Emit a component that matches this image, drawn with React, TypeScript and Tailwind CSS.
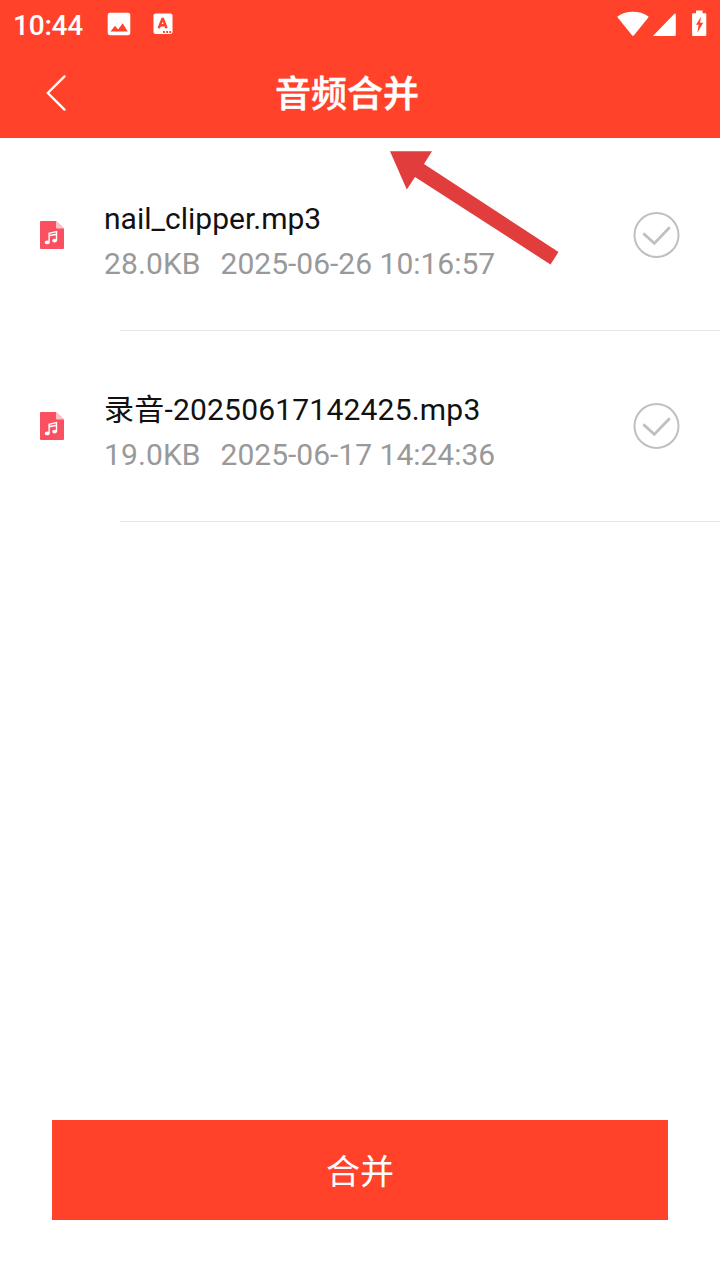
import { useState } from 'react';
import { clsx } from 'clsx';

interface AudioFile {
  id: number;
  name: string;
  size: string;
  createdAt: string;
}

const AUDIO_FILES: AudioFile[] = [
  {
    id: 1,
    name: 'nail_clipper.mp3',
    size: '28.0KB',
    createdAt: '2025-06-26 10:16:57',
  },
  {
    id: 2,
    name: '录音-20250617142425.mp3',
    size: '19.0KB',
    createdAt: '2025-06-17 14:24:36',
  },
];

// 含中文的文件名需要稍宽的字距
const hasChinese = (text: string) => /[\u4e00-\u9fff]/.test(text);

function StatusBar() {
  return (
    <div className="flex h-[50px] items-center justify-between pr-[13px] pl-[13px]">
      <div className="flex items-center">
        <span className="w-[94px] pt-0.5 text-[28px] leading-[48px] font-medium tracking-[-0.2px]">
          10:44
        </span>
        {/* 图片通知 */}
        <svg
          className="mb-0.5"
          width="24"
          height="24"
          viewBox="0 0 24 24"
          fill="none"
        >
          <rect x="0.7" y="0.7" width="22.6" height="22.6" rx="2.4" fill="#fff" />
          <path d="M3.5 19.5 8 13.7l3.1 3.8 4.6-6.2 5 8.2z" fill="#ff4229" />
        </svg>
        {/* 输入法通知 */}
        <svg
          className="mb-0.5 ml-[22px]"
          width="20"
          height="22"
          viewBox="0 0 20 22"
          fill="none"
        >
          <rect x="0.5" y="0.5" width="19" height="20.5" rx="2" fill="#fff" />
          <path
            d="M5.7 15.2 9.7 5.2l3.8 10M7.2 12.2h5"
            stroke="#ff4229"
            strokeWidth="2.5"
            strokeLinejoin="bevel"
          />
          <path d="M10 19h1.8M13.2 19H15M16.3 19h1.8" stroke="#ff4229" strokeWidth="1.8" />
        </svg>
      </div>

      <div className="flex items-center pb-[3px]">
        <svg width="32" height="26" viewBox="0 0 32 26" fill="#fff">
          <path d="M.9 5.2C9.2-.6 22.8-.6 31.1 5.2c.5.3.6.8.2 1.3L17 24.2c-.6.7-1.4.7-2 0L.7 6.5C.3 6 .4 5.5.9 5.2z" />
        </svg>
        <svg
          className="ml-[4px]"
          width="23"
          height="26"
          viewBox="0 0 23 26"
          fill="#fff"
        >
          <path d="M.6 24.2 21.2 3c.8-.8 1.6-.5 1.6.6v20.5c0 .5-.2.8-.8.8H1c-.7 0-.8-.3-.4-.7z" />
        </svg>
        <svg
          className="ml-[15px]"
          width="16"
          height="27"
          viewBox="0 0 16 27"
          fill="none"
        >
          <path
            d="M5 .6h6.6v2.6H14c.8 0 1.3.5 1.3 1.3v20.3c0 .8-.5 1.3-1.3 1.3H2.4c-.8 0-1.3-.5-1.3-1.3V4.5c0-.8.5-1.3 1.3-1.3H5z"
            fill="#fff"
          />
          <path d="M10 6.8 5 14.8h2.6L6.4 22.8l5.8-10H9z" fill="#ff4229" />
        </svg>
      </div>
    </div>
  );
}

function MusicFileIcon() {
  return (
    <svg width="24" height="28" viewBox="0 0 24 28" fill="none">
      <path
        d="M1 0h15l8 7.5V27a1 1 0 0 1-1 1H1a1 1 0 0 1-1-1V1a1 1 0 0 1 1-1z"
        fill="#fb5060"
      />
      <path d="M16 0l8 7.5h-7a1 1 0 0 1-1-1z" fill="#fdc3c8" />
      <path d="M9.1 21.4V12.2l7.4-1.6v8.8M9.1 14.8l7.4-1.6" stroke="#fff" strokeWidth="1.4" />
      <ellipse cx="7.2" cy="21.4" rx="2.4" ry="1.9" fill="#fff" />
      <ellipse cx="14.6" cy="19.6" rx="2.4" ry="1.9" fill="#fff" />
    </svg>
  );
}

interface AudioItemProps {
  file: AudioFile;
  isSelected: boolean;
  onToggle: () => void;
}

function AudioItem({ file, isSelected, onToggle }: AudioItemProps) {
  return (
    <li className="flex h-[191px] flex-col">
      <button
        type="button"
        aria-pressed={isSelected}
        className="flex flex-1 items-center pr-10 pl-10 text-left"
        onClick={onToggle}
      >
        <MusicFileIcon />
        <div className="ml-10 flex-1 pt-3 text-[30px] leading-[45px]">
          <p
            className={clsx(
              'text-[#111]',
              hasChinese(file.name) && 'tracking-[0.2px]',
            )}
          >
            {file.name}
          </p>
          <p className="flex gap-5 text-[#999]">
            <span className="tracking-[0.1px]">{file.size}</span>
            <span>{file.createdAt}</span>
          </p>
        </div>
        <svg
          className={clsx(isSelected ? 'text-[#ff4229]' : 'text-[#c0c0c0]')}
          width="47"
          height="47"
          viewBox="0 0 47 47"
          fill="none"
          stroke="currentColor"
        >
          <circle cx="23.5" cy="23" r="22" strokeWidth="2" />
          <path d="M10.3 21.4 21.3 31.4 36.8 15.2" strokeWidth="2.8" />
        </svg>
      </button>
      <div className="ml-[120px] h-px bg-[#e8e8e8]" />
    </li>
  );
}

export default function App() {
  const [selectedIds, setSelectedIds] = useState<number[]>([]);

  const toggleSelected = (id: number) => {
    setSelectedIds((prev) =>
      prev.includes(id) ? prev.filter((item) => item !== id) : [...prev, id],
    );
  };

  return (
    <div className="relative flex h-[1280px] w-[720px] flex-col bg-white font-[Roboto,'Noto_Sans_CJK_SC',sans-serif]">
      <header className="h-[138px] bg-[#ff4229] text-white">
        <StatusBar />
        <div className="flex h-[88px] items-center">
          <button type="button" aria-label="返回" className="mb-0.5 ml-[45px]">
            <svg width="22" height="38" viewBox="0 0 22 38" fill="none">
              <path
                d="M19.5 2.4 2.8 19 19.5 35.6"
                stroke="#fff"
                strokeWidth="2.3"
                strokeLinecap="round"
              />
            </svg>
          </button>
          <h1 className="flex-1 pt-0.5 pr-[93px] text-center text-[36px] leading-[88px] font-medium [-webkit-text-stroke:0.5px_white]">
            音频合并
          </h1>
        </div>
      </header>

      <ul className="flex-1 pt-0.5">
        {AUDIO_FILES.map((file) => (
          <AudioItem
            key={file.id}
            file={file}
            isSelected={selectedIds.includes(file.id)}
            onToggle={() => toggleSelected(file.id)}
          />
        ))}
      </ul>

      <button
        type="button"
        className="mx-[52px] mb-[60px] h-[100px] bg-[#ff4229] pt-1 text-[34px] text-white"
      >
        合并
      </button>

      {/* 指向标题的箭头 */}
      <svg
        className="pointer-events-none absolute top-[150px] left-[389px]"
        width="170"
        height="116"
        viewBox="0 0 170 116"
        fill="#e23d3d"
      >
        <path d="M1 1.2 43 1.2 35 14 169.5 102 161.5 114.5 26 27 17.8 39.5z" />
      </svg>
    </div>
  );
}
